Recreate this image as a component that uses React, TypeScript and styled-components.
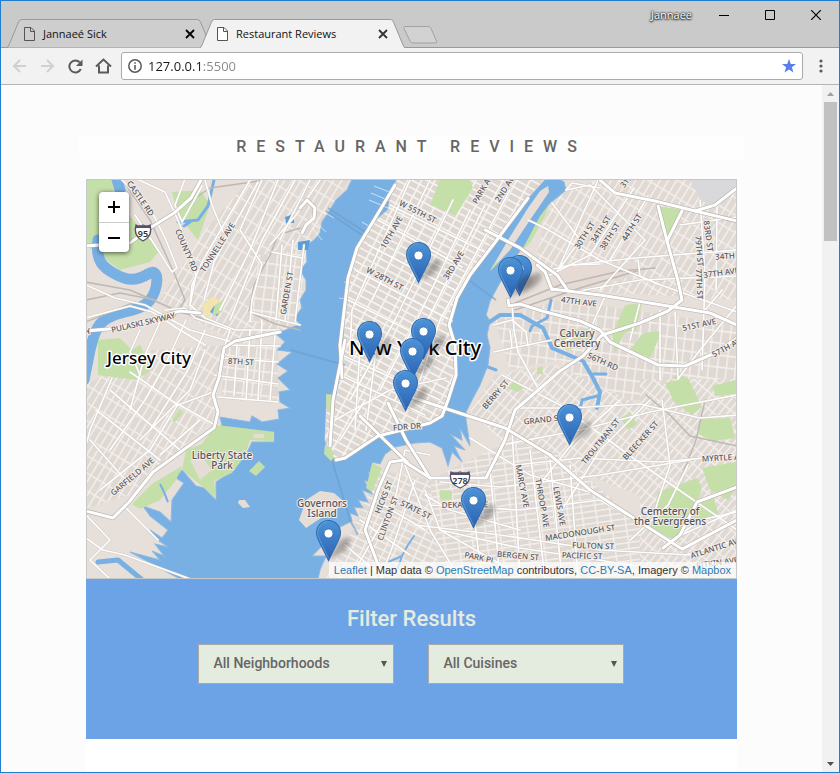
import React from "react";
import styled, { createGlobalStyle } from "styled-components";

const GlobalStyle = createGlobalStyle`
  * { box-sizing: border-box; }
  body { margin: 0; background: #fdfdfd; font-family: Roboto, "Liberation Sans", sans-serif; }
  button, input, select { font: inherit; }
`;

/* ---------- browser window ---------- */

const BrowserWindow = styled.div`
  display: flex;
  flex-direction: column;
  height: 100vh;
  min-height: 400px;
  border: 1px solid #1e7fd0;
  overflow: hidden;
`;

const TitleBar = styled.header`
  display: flex;
  justify-content: space-between;
  align-items: flex-end;
  height: 47px;
  padding-left: 6px;
  background: #cacaca;
  border-bottom: 1px solid #999;
  flex: none;
`;

const TabStrip = styled.nav`
  display: flex;
  align-items: flex-end;
  margin-bottom: -1px;
`;

const Tab = styled.div<{ $active?: boolean }>`
  position: relative;
  z-index: ${(p) => (p.$active ? 2 : 1)};
  display: flex;
  align-items: center;
  gap: 8px;
  width: 205px;
  height: 29px;
  margin-right: -12px;
  padding: 0 17px;
`;

const TabShape = styled.svg`
  position: absolute;
  inset: 0;
  z-index: -1;
  width: 100%;
  height: 100%;
`;

const TabTitle = styled.button`
  flex: 1;
  padding: 0;
  border: 0;
  background: none;
  color: #111;
  font: 11px/16px "Open Sans", "Noto Sans", sans-serif;
  text-align: left;
  white-space: nowrap;
`;

const IconButton = styled.button<{ $width: number }>`
  display: flex;
  align-items: center;
  justify-content: center;
  flex: none;
  width: ${(p) => p.$width}px;
  padding: 0;
  border: 0;
  background: none;
`;

const NewTab = styled(IconButton)`
  margin: 0 0 4px 10px;
`;

const WindowControls = styled.div`
  display: flex;
  align-self: flex-start;
  align-items: center;
  height: 28px;
`;

const UserName = styled.span`
  margin-right: 9px;
  color: #fff;
  font: 11px/16px "Open Sans", "Noto Sans", sans-serif;
  text-shadow: 0 0 2px #222, 0 0 2px #222, 0 1px 2px #222;
`;

const Toolbar = styled.div`
  display: flex;
  align-items: center;
  height: 37px;
  padding: 0 4px;
  background: #f2f2f2;
  border-bottom: 1px solid #b4b4b4;
  flex: none;
`;

const AddressBar = styled.div`
  display: flex;
  align-items: center;
  flex: 1;
  gap: 6px;
  height: 28px;
  margin: 0 4px;
  padding: 0 6px;
  border: 1px solid #aaa;
  border-radius: 3px;
  background: #fff;
`;

const AddressInput = styled.input`
  flex: 1;
  min-width: 0;
  height: 24px;
  padding: 0;
  border: 0;
  outline: 0;
  background: linear-gradient(90deg, #1a1a1a 53px, #888 53px) text;
  color: transparent;
  font: 13px/20px "Open Sans", "Noto Sans", sans-serif;
`;

const Viewport = styled.div`
  display: flex;
  flex: 1;
  min-height: 0;
`;

const ScrollTrack = styled.div`
  display: flex;
  flex-direction: column;
  align-items: center;
  width: 17px;
  background: #f1f1f1;
`;

const ScrollArrow = styled.button`
  display: flex;
  align-items: center;
  justify-content: center;
  width: 17px;
  height: 17px;
  padding: 0;
  border: 0;
  background: none;
`;

const ScrollThumb = styled.div`
  width: 13px;
  height: 139px;
  margin-bottom: auto;
  background: #c1c1c1;
`;

/* ---------- page ---------- */

const Page = styled.main`
  flex: 1;
  min-width: 0;
  overflow: hidden;
  padding-top: 50px;
  background: #fcfcfc;
`;

const PageTitle = styled.h1`
  width: 81%;
  margin: 0 auto 20px;
  background: #fefefe;
  color: #666;
  font-size: 16px;
  font-weight: 500;
  line-height: 24px;
  letter-spacing: 10px;
  text-align: center;
  text-transform: uppercase;
  white-space: nowrap;
`;

const Content = styled.div`
  width: 79.3%;
  min-height: 600px;
  margin: 0 auto;
  background: #fff;
`;

const MapFrame = styled.section`
  position: relative;
  height: 400px;
  border: 1px solid #c6c9cc;
  overflow: hidden;
  background: #e5ded7;
`;

const MapDrawing = styled.svg`
  display: block;
  width: 100%;
  height: 100%;
  font-family: "Noto Sans", "Open Sans", sans-serif;
`;

const ZoomControl = styled.div`
  position: absolute;
  top: 12px;
  left: 12px;
  display: flex;
  flex-direction: column;
  border-radius: 4px;
  background: #fff;
  box-shadow: 0 1px 5px rgba(0, 0, 0, 0.65);
`;

const ZoomButton = styled.button`
  display: flex;
  align-items: center;
  justify-content: center;
  width: 30px;
  height: 30px;
  padding: 0;
  border: 0;
  background: none;
  & + & { border-top: 1px solid #ccc; }
`;

const Attribution = styled.div`
  position: absolute;
  right: 0;
  bottom: 0;
  padding: 0 5px;
  background: rgba(255, 255, 255, 0.7);
  color: #333;
  font: 11px/16px "Liberation Sans", Arial, sans-serif;
  white-space: nowrap;
`;

const AttributionLink = styled.a`
  color: #2a7ab5;
  text-decoration: none;
`;

const FilterPanel = styled.form`
  height: 160px;
  padding-top: 26px;
  background: #6ca3e6;
`;

const FilterHeading = styled.h2`
  margin: 0 0 12px;
  color: #e4ebdf;
  font-size: 22px;
  font-weight: 500;
  line-height: 27px;
  text-align: center;
`;

const FilterRow = styled.div`
  display: flex;
  justify-content: center;
  gap: 34px;
`;

const SelectBox = styled.label`
  position: relative;
  width: 196px;
`;

const Select = styled.select`
  appearance: none;
  width: 100%;
  height: 40px;
  padding: 0 14px 2px;
  border: 1px solid #aaa;
  border-radius: 0;
  background: #e4ebdf;
  color: #666;
  font-size: 14px;
  font-weight: 500;
`;

const SelectArrow = styled.svg`
  position: absolute;
  top: 17px;
  right: 7px;
  pointer-events: none;
`;

/* ---------- map data ---------- */

const WATER =
  "M352 179 347 190 336 200 330 210 322 222 320 233 314 240 306 246 307 262 300 270 306 280 306 290 300 300 302 308 294 318 300 324 276 334 285 342 277 350 292 352 277 364 288 371 278 378 290 390 279 392 280 402 290 408 278 410 279 419 262 422 252 416 250 422 220 417 222 426 240 428 274 432 274 442 252 442 246 455 234 470 222 478 216 482 216 500 204 488 196 486 182 470 176 478 184 483 172 500 171 522 160 512 143 506 150 516 168 530 162 538 150 530 158 540 168 547 155 544 164 556 152 551 160 560 130 552 180 579H318L320 570 326 556 312 556 324 544 338 528 352 521 350 513 358 516 354 507 363 508 358 500 368 502 362 490 372 494 364 480 374 484 368 472 376 474 372 462 380 464 385 454 395 447 415 443 430 442 442 448 448 466 452 452 462 462 454 446 465 450 450 434 462 440 460 428 470 446 466 420 466 412 473 398 480 385 488 365 490 348 487 335 490 321 486 315 490 301 497 288 512 261 525 245 540 218 550 203 566 190 564 182 559 179Z";
const MANHATTAN =
  "M397 179 390 198 388 210 374 222 364 236 357 248 352 262 348 278 348 300 345 320 343 348 340 378 336 398 327 396 325 440 329 450 336 461 350 456 365 446 378 434 400 431 430 423 442 415 448 403 456 375 455 345 449 325 457 298 470 275 493 245 512 221 528 198 545 179Z";

const ISLANDS = [
  "M548 186 540 191 528 208 508 240 490 271 510 250 530 220 549 192Z",
  "M299 520 306 500 320 491 334 493 342 500 338 508 318 520 306 528Z",
  "M239 500 245 500 250 507 243 508 238 503Z",
];

const PARKS = [
  "M86 179H112L114 196 140 228 160 250 150 262 120 270 100 255 86 246Z",
  "M172 192 200 190 210 205 198 240 178 215Z",
  "M440 180H470L473 188 456 215 430 205Z",
  "M216 425 274 432V441L250 440 245 455 232 473 214 481 216 499 202 486 182 470 186 450 202 444Z",
  "M152 484 182 466 176 480 160 500 140 509 132 504Z",
  "M249 471 259 461 265 467 256 476Z",
  "M98 340 120 338 132 350 140 345 152 370 136 380 98 375Z",
  "M625 305 642 303 636 330 624 333 615 353 612 335Z",
  "M643 333 662 331 650 358 630 350Z",
  "M658 206 682 210 667 238Z",
  "M566 330 596 328 590 345 566 350 560 340Z",
  "M658 492 697 478 702 488 697 502 678 538 668 543 650 530 655 505Z",
  "M702 468 736 462V488L728 500 710 490Z",
  "M698 503 714 498 718 514 690 528Z",
  "M665 383 688 378 702 407 692 415 674 402Z",
  "M700 419 730 418 735 438 714 441 698 434Z",
  "M712 386 736 380V394L716 396Z",
  "M620 418 630 413 637 424 628 430Z",
  "M440 490 452 491V500L440 499Z",
  "M326 394 336 395 335 410 327 412Z",
  "M325 444 334 452 332 462 324 454Z",
  "M372 463 382 468 372 492 366 488Z",
  "M174 423 182 414 180 408 172 420Z",
  "M215 305 226 298 222 312 212 316Z",
  "M550 203 544 218 530 243 522 250 540 216Z",
  "M508 388 516 379 524 388 518 392Z",
  "M537 368 542 366 543 374 537 374Z",
  "M490 271 495 262 499 262Z",
  "M672 378 680 372 686 380Z",
];

const GRIDS: { area: string; grid: string }[] = [
  { area: "M160 300 205 230 250 179H350L328 212 304 260 300 325 276 335 240 345Z", grid: "gridSlant" },
  { area: "M258 255 306 250 300 325 250 322Z", grid: "gridUpright" },
  { area: "M86 385 150 350 225 345 212 420 130 495 86 508Z", grid: "gridSlant" },
  { area: "M225 345 278 345V400L222 395Z", grid: "gridUpright" },
  { area: "M565 190 600 179H737V300L570 290 535 265 545 215Z", grid: "gridSlant" },
  { area: "M560 300 737 325V400H600L560 360 510 370 495 320Z", grid: "gridUpright" },
  { area: "M495 375 555 365 650 410 650 500 500 440 470 410Z", grid: "gridBushwick" },
  { area: "M430 480 510 440 560 455 660 540 640 579H440Z", grid: "gridBedStuy" },
  { area: "M380 470 430 480 440 579H325L345 545Z", grid: "gridHeights" },
  { area: "M640 379H737V579H640Z", grid: "gridBushwick" },
];

const RAILS = [
  "M300 228 278 235 270 255 254 285 249 312 275 324 300 330",
  "M122 179 150 220 175 275 185 300 172 320",
  "M86 282 130 290 180 312 225 325",
  "M170 215 210 188 260 181",
  "M515 303 560 285 620 271 655 268",
  "M515 310 580 288 640 270",
  "M646 395 670 415 690 436 737 446",
  "M705 400 696 440 680 480",
  "M86 300 120 293 155 300",
  "M86 322 135 302",
];

const MINOR = [
  "M122 180 150 208 166 240 177 268 172 272 158 250 135 215",
  "M137 179 165 192 180 225 196 275 190 305",
  "M185 179 175 205 182 222 202 186",
  "M205 180 212 205 223 232",
  "M250 180 203 260 192 285 190 305 205 318 235 330 280 330",
  "M258 182 214 262 204 300",
  "M262 180 240 230 262 264 252 300 250 322",
  "M278 180 250 250 220 310",
  "M295 180 262 240 230 320",
  "M310 180 280 240",
  "M320 180 296 215 270 245",
  "M165 310 185 308 195 318 230 330 225 345",
  "M86 285 115 298 145 305 190 330 232 342",
  "M86 318 130 306 152 312 180 330 205 345",
  "M140 330 130 352 140 375",
  "M160 322 145 355 130 410",
  "M186 320 165 365 145 400 110 450",
  "M205 330 188 370 150 430",
  "M130 372 178 405 213 392",
  "M112 378 90 430 86 445",
  "M110 390 180 450",
  "M96 410 160 460",
  "M90 440 130 485",
  "M178 404 215 425",
  "M178 404 150 450 100 490",
  "M160 455 200 420",
  "M140 440 190 390 205 350",
  "M225 345 280 346",
  "M222 358 278 362",
  "M214 375 278 384",
  "M218 397 278 402",
  "M237 345 234 395",
  "M250 330 246 400",
  "M262 320 258 400",
  "M275 335 270 400",
  "M282 245 276 320",
  "M293 240 285 320",
  "M304 245 295 322",
  "M272 252 302 258",
  "M250 312 300 325",
  "M86 538 103 550 125 555 190 579",
  "M86 515 110 540 90 560 110 579",
  "M123 505 158 540",
  "M378 220 462 267",
  "M390 205 430 225 485 252",
  "M368 245 455 290",
  "M355 270 452 321",
  "M348 300 448 350",
  "M348 328 400 350 430 370",
  "M410 180 352 310 350 350",
  "M430 180 372 300",
  "M453 200 395 320 350 400",
  "M470 210 412 330 380 390",
  "M485 205 425 325 395 400",
  "M510 190 440 320 420 380",
  "M342 355 440 400",
  "M340 375 425 415",
  "M360 345 355 430",
  "M376 350 366 430",
  "M335 420 390 390 446 378",
  "M340 440 365 400",
  "M566 190 590 185 645 240 600 290",
  "M566 190 572 183 600 188",
  "M528 220 545 228 600 260 658 284 737 312",
  "M552 203 580 240 560 268",
  "M550 270 570 265 600 264",
  "M598 180 558 270",
  "M634 188 590 255 550 275",
  "M648 196 610 260",
  "M572 265 635 258 737 250",
  "M568 293 640 280 737 276",
  "M638 260 640 276 658 284",
  "M680 225 737 217",
  "M700 200 705 275 702 370",
  "M717 205 716 290",
  "M722 290 705 310 737 325",
  "M605 296 590 330 555 345",
  "M640 302 630 340",
  "M660 310 660 380",
  "M675 312 678 379",
  "M737 305 700 350 678 379",
  "M512 305 514 330 518 352 540 392",
  "M494 352 512 348 552 340",
  "M510 330 512 348",
  "M493 325 512 320 526 332 528 346",
  "M515 408 570 408 640 404 700 418 737 415",
  "M500 445 580 430 650 412 737 395",
  "M515 465 580 458 660 462 737 455",
  "M470 438 530 475 600 495 670 540 737 510",
  "M502 375 560 405 650 470 737 530",
  "M620 400 575 440 535 490",
  "M650 400 600 450 562 510",
  "M662 400 670 465 655 510",
  "M688 465 668 505 630 540",
  "M440 482 500 487 600 475 690 460",
  "M430 505 520 510 600 500 680 545",
  "M415 525 500 535 600 550 690 555",
  "M440 530 520 548 650 568 737 570",
  "M425 490 440 530 520 575",
  "M470 485 482 579",
  "M490 470 500 579",
  "M512 430 520 579",
  "M530 450 545 579",
  "M550 460 562 579",
  "M570 465 578 579",
  "M405 465 430 530 460 579",
  "M430 455 405 450 395 500 350 579",
  "M415 480 395 540 380 579",
  "M425 495 450 510 520 530",
  "M375 500 425 530",
  "M360 520 410 555",
  "M345 545 385 579",
  "M685 555 737 540",
  "M669 543 700 520 737 512",
];

const MAJOR = [
  "M86 246 130 243 150 228 174 213 191 198 201 180",
  "M86 331 120 328 180 311 200 313",
  "M280 332 235 341 224 348 219 378 213 395 218 412 214 428 186 448 153 472 129 502 113 518 86 511",
  "M302 233 306 225 314 218 315 208 307 200 300 208",
  "M342 378 340 345 348 278 357 248 374 220 395 185",
  "M330 446 333 400 345 340",
  "M336 460 345 458 378 436 430 423 442 416 448 400 456 375 455 345 449 325 457 298 470 275 493 245 528 198",
  "M485 230 520 248 557 275 568 291",
  "M537 265 545 272 552 290",
  "M600 180 615 193 655 201 695 211 715 205 737 188",
  "M695 211 737 221",
  "M682 211 667 241",
  "M658 206 667 241 678 281 682 300 668 311 640 323 602 335 583 356 560 371 515 410 505 440 486 478 430 478 405 462",
  "M508 300 509 306 520 304 542 311 580 321 600 330 610 342 658 365 685 366 715 353 737 338",
  "M552 289 600 295 668 306 710 313 737 325",
  "M360 416 408 463",
  "M388 403 406 440 430 478",
  "M408 396 450 410 505 428 550 455",
  "M404 460 390 462 378 490 365 530 380 570",
  "M550 455 590 490 660 535 682 549 737 520",
  "M663 548 680 535 697 502 737 487",
];

type LabelSpec = [text: string, x: number, y: number, angle: number];

const STREET_LABELS: LabelSpec[] = [
  ["CASTLE RD", 141, 198, 55],
  ["COUNTY RD", 187, 250, 67],
  ["TONNELLE AVE", 217, 247, -57],
  ["GARDEN ST", 286, 293, -80],
  ["PULASKI SKYWAY", 143, 322, -13],
  ["Y", 88, 331, -20],
  ["8TH ST", 241, 361, 3],
  ["W 55TH ST", 418, 211, 27],
  ["10TH AVE", 391, 232, -60],
  ["W 28TH ST", 385, 278, 28],
  ["3RD AVE", 453, 265, -58],
  ["PARK AVE", 483, 187, -60],
  ["2ND AVE", 505, 187, -58],
  ["30TH ST", 584, 235, -57],
  ["34TH ST", 600, 229, -57],
  ["38TH ST", 609, 236, -57],
  ["44TH ST", 631, 227, -57],
  ["31ST", 627, 179, -50],
  ["83RD ST", 709, 236, 82],
  ["79TH ST", 700, 251, 85],
  ["77TH ST", 700, 284, 87],
  ["34TH AVE", 733, 255, -4],
  ["37TH AVE", 721, 272, -8],
  ["47TH AVE", 579, 301, 7],
  ["51ST AVE", 699, 324, -12],
  ["57TH AVE", 728, 346, -28],
  ["56TH RD", 603, 361, 24],
  ["GARFIELD AVE", 132, 476, -40],
  ["FDR DR", 407, 426, -5],
  ["BERRY ST", 495, 394, -49],
  ["HICKS ST", 383, 497, -68],
  ["CLINTON ST", 387, 518, -70],
  ["STATE ST", 416, 509, 26],
  ["DEKALB AVE", 465, 504, -1],
  ["PARK PL", 480, 557, 12],
  ["BERGEN ST", 518, 555, 5],
  ["GRAND ST", 543, 419, -6],
  ["TROUTMAN ST", 600, 441, -51],
  ["BLEECKER ST", 640, 440, -48],
  ["MYRTLE AVE", 725, 457, -3],
  ["MARCY AVE", 523, 486, 79],
  ["THROOP AVE", 543, 503, 80],
  ["LEWIS AVE", 560, 506, 80],
  ["MACDONOUGH ST", 580, 532, -9],
  ["FULTON ST", 593, 545, 2],
  ["PACIFIC ST", 582, 555, 2],
  ["ATLANTIC AVE", 716, 547, -18],
  ["PITKIN AVE", 717, 562, -8],
];

const PLACE_LABELS: LabelSpec[] = [
  ["Liberty State", 222, 458, 0],
  ["Park", 222, 468, 0],
  ["Governors", 322, 506, 0],
  ["Island", 322, 516, 0],
  ["Calvary", 577, 336, 0],
  ["Cemetery", 577, 346, 0],
  ["Cemetery of", 670, 514, 0],
  ["the Evergreens", 670, 524, 0],
];

const PINS: [number, number][] = [
  [418, 283],
  [519, 296],
  [510, 298],
  [369, 362],
  [423, 359],
  [412, 379],
  [405, 411],
  [569, 445],
  [473, 528],
  [328, 561],
];

const Label = styled.text<{ $size: number }>`
  font-size: ${(p) => p.$size}px;
  font-weight: 500;
  fill: #57555c;
  stroke: #f3eeea;
  stroke-width: 2px;
  stroke-linejoin: round;
  paint-order: stroke;
  text-anchor: middle;
  dominant-baseline: central;
`;

const CityLabel = styled.text<{ $size: number }>`
  font-size: ${(p) => p.$size}px;
  font-weight: 500;
  fill: #000;
  stroke: #fff;
  stroke-width: 3px;
  stroke-linejoin: round;
  paint-order: stroke;
  text-anchor: middle;
`;

function GridPattern({ id, angle, w, h }: { id: string; angle: number; w: number; h: number }) {
  return (
    <pattern id={id} width={w} height={h} patternUnits="userSpaceOnUse" patternTransform={`rotate(${angle})`}>
      <rect width={w} height={h} fill="#ddd6d0" />
      <path d={`M0 0H${w}M0 0V${h}`} stroke="#faf8f6" strokeWidth="3" />
    </pattern>
  );
}

function Shield({ x, y, text }: { x: number; y: number; text: string }) {
  const w = text.length > 2 ? 10 : 8;
  return (
    <g transform={`translate(${x} ${y})`}>
      <path
        d={`M${-w + 1} -7Q${-w / 2} -5 0 -7Q${w / 2} -5 ${w - 1} -7Q${w + 2} 4 0 9Q${-w - 2} 4 ${-w + 1} -7Z`}
        fill="#fff"
        stroke="#55536b"
        strokeWidth="1.3"
      />
      <path d={`M${-w + 1} -5H${w - 1}`} stroke="#55536b" strokeWidth="2" />
      <text y="5" textAnchor="middle" fontSize="9" fontWeight="600" fill="#333">
        {text}
      </text>
    </g>
  );
}

function Pin({ x, y }: { x: number; y: number }) {
  return (
    <g transform={`translate(${x - 12} ${y - 41})`}>
      <path d="M12 40 23 22Q31 15 34 19Q36 25 27 32Z" fill="#333" opacity="0.35" filter="url(#soft)" />
      <path
        d="M12.5.5C5.700.5.5 6 .5 12.900c0 3 1.300 6 2.600 8.600L12.500 40.500 21.900 21.500c1.300-2.600 2.600-5.600 2.600-8.600C24.500 6 19.300.5 12.500.5z"
        fill="url(#pinFill)"
        stroke="#2e6caf"
      />
      <path d="M12.500 1.600C6.400 1.600 1.600 6.600 1.600 12.900c0 3 1.300 5.600 2.500 8.100L12.500 38" fill="none" stroke="#7ab0e2" strokeOpacity=".5" />
      <circle cx="12.500" cy="13.500" r="4.500" fill="#fff" stroke="#2e6caf" strokeWidth=".8" />
    </g>
  );
}

function CityMap() {
  return (
    <MapDrawing viewBox="87 180 649 398" preserveAspectRatio="xMidYMid slice" role="img" aria-label="Map of New York City restaurants">
      <defs>
        <GridPattern id="gridManhattan" angle={28} w={12} h={7} />
        <GridPattern id="gridSlant" angle={31} w={7} h={15} />
        <GridPattern id="gridUpright" angle={7} w={9} h={12} />
        <GridPattern id="gridBushwick" angle={40} w={6} h={13} />
        <GridPattern id="gridBedStuy" angle={-8} w={14} h={6} />
        <GridPattern id="gridHeights" angle={25} w={10} h={7} />
        <linearGradient id="pinFill" x1="0" y1="0" x2="0" y2="1">
          <stop offset="0" stopColor="#4d93d6" />
          <stop offset="1" stopColor="#2a62b4" />
        </linearGradient>
        <filter id="soft" x="-50%" y="-50%" width="200%" height="200%">
          <feGaussianBlur stdDeviation="2" />
        </filter>
        <clipPath id="manhattanClip">
          <path d={MANHATTAN} />
        </clipPath>
      </defs>

      <rect x="87" y="180" width="649" height="398" fill="#e7dfd9" />
      <g opacity="0.65">
        {GRIDS.map((g) => (
          <path key={g.area} d={g.area} fill={`url(#${g.grid})`} />
        ))}
      </g>
      <path d="M690 180H736V190L712 205 700 200Z" fill="#d9d8da" />
      <path d="M202 305 214 296 220 302 206 320Z" fill="#f3e3ae" />
      <path d="M214 306 222 309 217 316 210 312Z" fill="#6aa5dc" />
      <path d="M545 270 600 264 640 262 640 274 560 298Z" fill="#e5dad4" />
      <g fill="#c5dfa8">
        {PARKS.slice(0, 2).map((d) => (
          <path key={d} d={d} />
        ))}
      </g>

      <path d={WATER} fill="#79b0e4" stroke="#8eb9df" />
      <g fill="none" stroke="#79b0e4" strokeLinecap="round" strokeLinejoin="round">
        <path strokeWidth="11" d="M116 176 120 190M98 240C95 262 104 268 115 274S135 282 148 274S158 290 150 300S128 310 112 316S94 335 90 350L84 380" />
        <path strokeWidth="4" d="M488 323 500 315 520 315 543 328 552 348 583 361 593 378 600 392 597 408" />
        <path strokeWidth="3" d="M597 396 582 400 580 410M530 331 532 326 547 318 551 300M593 374 606 374M178 222 198 220 208 206 214 180M190 222 184 226M488 367 496 370" />
        <path strokeWidth="5" d="M98 562 118 560 135 574 145 582" />
        <path strokeWidth="2" d="M388 562 402 556 408 545 414 536M402 556 398 568M125 360 132 372" />
      </g>
      <path d="M285 217 294 214 294 223 286 223ZM298 242 310 240 308 250 298 250Z" fill="#5a9fdb" />
      <g stroke="#fff" strokeOpacity="0.55" strokeWidth="1">
        <path d="M369 200 388 208M371 193 390 201M374 186 392 193M362 222 372 228M344 290 350 291M339 298 348 299M343 310 349 311M344 282 350 283" />
        <path d="M312 228 322 240M316 222 326 232M324 212 334 218" />
      </g>
      <path d={MANHATTAN} fill="#e9e3dd" stroke="#cbd3d8" />
      <g clipPath="url(#manhattanClip)" opacity="0.9">
        <path d={MANHATTAN} fill="url(#gridManhattan)" />
      </g>
      {ISLANDS.map((d) => (
        <path key={d} d={d} fill="#e6ded6" />
      ))}
      <g fill="#c5dfa8">
        {PARKS.slice(2).map((d) => (
          <path key={d} d={d} />
        ))}
      </g>
      <path d="M190 460 202 456 212 470 200 480ZM254 434 264 434 264 438 253 438Z" fill="#e4dcd5" />
      <path d="M160 484 164 492 168 502" stroke="#79b0e4" strokeWidth="2" fill="none" />
      <g fill="none" stroke="#6d9cc8" strokeOpacity="0.6" strokeWidth="2">
        <path d="M326 211 362 235M328 208 365 232M290 350 345 365M470 281 496 300M332 460 350 520 358 535" />
      </g>

      <g fill="none" strokeLinejoin="round" strokeLinecap="round">
        {RAILS.map((d) => (
          <path key={d} d={d} stroke="#bdb8b4" strokeWidth="1.400" />
        ))}
        {MINOR.map((d) => (
          <path key={`c${d}`} d={d} stroke="#cfc8c2" strokeWidth="2.500" />
        ))}
        {MINOR.map((d) => (
          <path key={d} d={d} stroke="#fff" strokeWidth="1.700" />
        ))}
        {MAJOR.map((d) => (
          <path key={`c${d}`} d={d} stroke="#b3aeab" strokeWidth="4.200" />
        ))}
        {MAJOR.map((d) => (
          <path key={d} d={d} stroke="#fff" strokeWidth="3.100" />
        ))}
      </g>

      {STREET_LABELS.map(([text, x, y, angle]) => (
        <Label key={text} $size={8} transform={`translate(${x} ${y}) rotate(${angle})`}>
          {text}
        </Label>
      ))}
      {PLACE_LABELS.map(([text, x, y]) => (
        <Label key={text} $size={10} x={x} y={y - 3}>
          {text}
        </Label>
      ))}
      <Shield x={143} y={232} text="95" />
      <Shield x={460} y={479} text="278" />
      <CityLabel $size={17} x={149} y={364}>
        Jersey City
      </CityLabel>
      <CityLabel $size={20} x={415} y={355}>
        New York City
      </CityLabel>
      {PINS.map(([x, y]) => (
        <Pin key={`${x}-${y}`} x={x} y={y} />
      ))}
    </MapDrawing>
  );
}

/* ---------- browser parts ---------- */

function BrowserTab({ title, active }: { title: string; active?: boolean }) {
  return (
    <Tab $active={active}>
      <TabShape viewBox="0 0 205 29" preserveAspectRatio="none">
        <path
          d="M0 28.500Q1 28.500 2 26L11.500 3Q12.500.5 14.500.5H190.500Q192.500.5 193.500 3L203 26Q204 28.500 205 28.500"
          fill={active ? "#f2f2f2" : "#cecece"}
          stroke="#999"
        />
        {active && <path d="M1 28.500H204" stroke="#f2f2f2" />}
      </TabShape>
      <svg width="11" height="14" viewBox="0 0 11 14" fill="none" stroke="#555">
        <path d="M.5.5H7L10.500 4V13.500H.5Z" fill={active ? "#fff" : "none"} />
        <path d="M6.500.5V4.500H10.500" />
      </svg>
      <TabTitle>{title}</TabTitle>
      <IconButton $width={10} aria-label={`Close ${title}`}>
        <svg width="10" height="10" viewBox="0 0 10 10" stroke={active ? "#333" : "#000"} strokeWidth="1.800">
          <path d="M1 1 9 9M9 1 1 9" />
        </svg>
      </IconButton>
    </Tab>
  );
}

export default function App() {
  return (
    <>
      <GlobalStyle />
      <BrowserWindow>
        <TitleBar>
          <TabStrip>
            <BrowserTab title="Jannaeé Sick" />
            <BrowserTab title="Restaurant Reviews" active />
            <NewTab $width={35} aria-label="New tab">
              <svg width="35" height="18" viewBox="0 0 35 18">
                <path d="M1.500.5H25Q27 .5 28 2.500L33.500 15Q34 17 32 17H10Q8 17 7 15L1 2.500Q.5.5 1.500.5Z" fill="#d2d2d2" stroke="#a2a2a2" />
              </svg>
            </NewTab>
          </TabStrip>
          <WindowControls>
            <UserName>Jannaee</UserName>
            <IconButton $width={46} aria-label="Minimize">
              <svg width="10" height="10"><path d="M0 5.500H10" stroke="#000" /></svg>
            </IconButton>
            <IconButton $width={46} aria-label="Maximize">
              <svg width="10" height="10"><path d="M.5.5H9.500V9.500H.5Z" stroke="#000" fill="none" /></svg>
            </IconButton>
            <IconButton $width={46} aria-label="Close">
              <svg width="10" height="10"><path d="M0 0 10 10M10 0 0 10" stroke="#000" strokeWidth="1.200" /></svg>
            </IconButton>
          </WindowControls>
        </TitleBar>

        <Toolbar>
          <IconButton $width={28} aria-label="Back">
            <svg width="15" height="14" viewBox="0 0 15 14" fill="none" stroke="#d0d0d0" strokeWidth="2"><path d="M14 7H2M8 1 2 7 8 13" /></svg>
          </IconButton>
          <IconButton $width={28} aria-label="Forward">
            <svg width="15" height="14" viewBox="0 0 15 14" fill="none" stroke="#d0d0d0" strokeWidth="2"><path d="M1 7H13M7 1 13 7 7 13" /></svg>
          </IconButton>
          <IconButton $width={28} aria-label="Reload">
            <svg width="15" height="15" viewBox="0 0 15 15">
              <path d="M12.800 10A6 6 0 1 1 11.800 3.400" fill="none" stroke="#5a5a5a" strokeWidth="2" />
              <path d="M14.500.5V7H8Z" fill="#5a5a5a" />
            </svg>
          </IconButton>
          <IconButton $width={28} aria-label="Home">
            <svg width="17" height="16" viewBox="0 0 17 16" fill="none" stroke="#5a5a5a" strokeWidth="2">
              <path d="M1 8.500 8.500 1.500 16 8.500M4 7.500V14.500H13V7.500" />
            </svg>
          </IconButton>
          <AddressBar>
            <svg width="14" height="14" viewBox="0 0 14 14">
              <circle cx="7" cy="7" r="6.200" fill="none" stroke="#5a5a5a" strokeWidth="1.500" />
              <path d="M6.200 3.200H7.800V4.800H6.200ZM6.200 6H7.800V10.800H6.200Z" fill="#5a5a5a" />
            </svg>
            <AddressInput aria-label="Address" defaultValue="127.0.0.1:5500" />
            <IconButton $width={14} aria-label="Bookmark">
              <svg width="14" height="14" viewBox="0 0 14 14">
                <path d="M7 0 8.800 5H14L9.900 8.300 11.400 13.600 7 10.500 2.600 13.600 4.100 8.300 0 5H5.200Z" fill="#5a7df0" />
              </svg>
            </IconButton>
          </AddressBar>
          <IconButton $width={28} aria-label="Menu">
            <svg width="4" height="14" fill="#5a5a5a"><circle cx="2" cy="2" r="1.600" /><circle cx="2" cy="7" r="1.600" /><circle cx="2" cy="12" r="1.600" /></svg>
          </IconButton>
        </Toolbar>

        <Viewport>
          <Page>
            <PageTitle>Restaurant Reviews</PageTitle>
            <Content>
              <MapFrame>
                <CityMap />
                <ZoomControl>
                  <ZoomButton aria-label="Zoom in">
                    <svg width="12" height="12" stroke="#000" strokeWidth="2"><path d="M0 6H12M6 0V12" /></svg>
                  </ZoomButton>
                  <ZoomButton aria-label="Zoom out">
                    <svg width="12" height="12" stroke="#000" strokeWidth="2"><path d="M0 6H12" /></svg>
                  </ZoomButton>
                </ZoomControl>
                <Attribution>
                  <AttributionLink href="#leaflet">Leaflet</AttributionLink> | Map data ©{" "}
                  <AttributionLink href="#osm">OpenStreetMap</AttributionLink> contributors,{" "}
                  <AttributionLink href="#license">CC-BY-SA</AttributionLink>, Imagery ©{" "}
                  <AttributionLink href="#mapbox">Mapbox</AttributionLink>
                </Attribution>
              </MapFrame>
              <FilterPanel>
                <FilterHeading>Filter Results</FilterHeading>
                <FilterRow>
                  {["All Neighborhoods", "All Cuisines"].map((name) => (
                    <SelectBox key={name}>
                      <Select aria-label={name}>
                        <option>{name}</option>
                      </Select>
                      <SelectArrow width="6" height="6">
                        <path d="M0 0H6L3 6Z" fill="#555" />
                      </SelectArrow>
                    </SelectBox>
                  ))}
                </FilterRow>
              </FilterPanel>
            </Content>
          </Page>
          <ScrollTrack>
            <ScrollArrow aria-label="Scroll up">
              <svg width="7" height="4"><path d="M0 4 3.500 0 7 4Z" fill="#a0a0a0" /></svg>
            </ScrollArrow>
            <ScrollThumb />
            <ScrollArrow aria-label="Scroll down">
              <svg width="7" height="4"><path d="M0 0 3.500 4 7 0Z" fill="#505050" /></svg>
            </ScrollArrow>
          </ScrollTrack>
        </Viewport>
      </BrowserWindow>
    </>
  );
}
